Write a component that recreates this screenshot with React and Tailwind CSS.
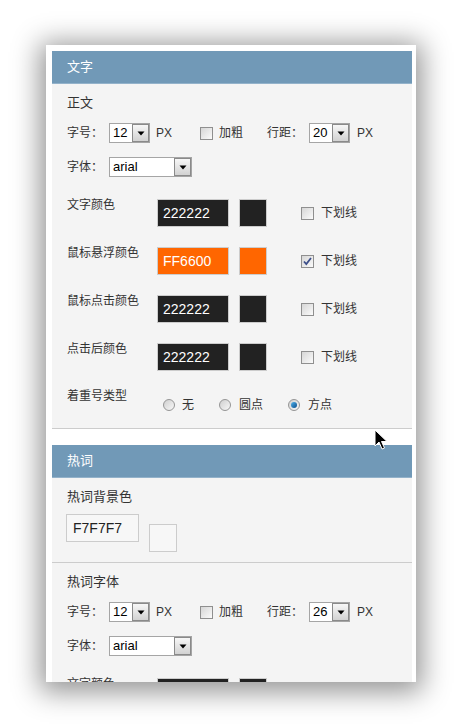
import React from 'react';

function Arrow() {
  return (
    <span className="flex h-[18px] w-[17px] items-center justify-center border border-[#8a8a8a] bg-gradient-to-b from-[#f7f7f7] to-[#d2d2d2]">
      <svg width="8" height="5" viewBox="0 0 8 5">
        <path d="M0.5 0.5h7L4 4.5z" fill="#000" />
      </svg>
    </span>
  );
}

function Select({ value, wide }) {
  return (
    <div className={`flex h-[20px] items-center border border-[#a5a5a5] bg-white ${wide ? 'w-[83px]' : 'w-[41px]'}`}>
      <span className="flex-1 pl-[3px] text-[13px] leading-[18px] text-black">{value}</span>
      <Arrow />
    </div>
  );
}

function Checkbox({ checked }) {
  return (
    <span className="flex h-[13px] w-[13px] shrink-0 items-center justify-center border border-[#8f8f8f] bg-gradient-to-br from-[#d6d6d6] to-[#fbfbfb]">
      {checked && (
        <svg width="9" height="9" viewBox="0 0 9 9">
          <path d="M1 4.5l2.3 2.6L8 1" fill="none" stroke="#3d4f8a" strokeWidth="1.8" />
        </svg>
      )}
    </span>
  );
}

function Radio({ checked }) {
  return (
    <span className="flex h-[12px] w-[12px] shrink-0 items-center justify-center rounded-full border border-[#959595] bg-gradient-to-br from-[#cfcfcf] to-[#f8f8f8]">
      {checked && <span className="h-[6px] w-[6px] rounded-full bg-gradient-to-br from-[#4fb2ec] to-[#0b4f8c]" />}
    </span>
  );
}

function FontRows({ title, line }) {
  return (
    <>
      <div className="text-[13px] leading-[18px]">{title}</div>
      <div className="mt-[11px] flex h-[20px] items-center text-[12px]">
        <span className="w-[42px]">字号：</span>
        <Select value="12" />
        <span className="ml-[6px]">PX</span>
        <span className="ml-[28px]"><Checkbox /></span>
        <span className="ml-[6px]">加粗</span>
        <span className="ml-[24px] w-[42px]">行距：</span>
        <Select value={line} />
        <span className="ml-[7px]">PX</span>
      </div>
      <div className="mt-[14px] flex h-[20px] items-center text-[12px]">
        <span className="w-[42px]">字体：</span>
        <Select value="arial" wide />
      </div>
    </>
  );
}

function ColorRow({ label, value, color, checked }) {
  return (
    <div className="flex h-[28px] items-start text-[12px]">
      <span className="w-[90px] leading-[12px]">{label}</span>
      <div
        className={`flex h-[28px] w-[72px] items-center border border-[#cccccc] pl-[5px] text-[14px] text-white ${color === 'orange' ? 'bg-[#ff6600]' : 'bg-[#222222]'}`}
      >
        {value}
      </div>
      <div className={`ml-[10px] h-[28px] w-[28px] border border-[#cccccc] ${color === 'orange' ? 'bg-[#ff6600]' : 'bg-[#222222]'}`} />
      <div className="ml-[34px] flex h-[28px] items-center">
        <Checkbox checked={checked} />
        <span className="ml-[7px]">下划线</span>
      </div>
    </div>
  );
}

function ColorRows() {
  return (
    <div className="mt-[22px] flex flex-col gap-[20px]">
      <ColorRow label="文字颜色" value="222222" />
      <ColorRow label="鼠标悬浮颜色" value="FF6600" color="orange" checked />
      <ColorRow label="鼠标点击颜色" value="222222" />
      <ColorRow label="点击后颜色" value="222222" />
    </div>
  );
}

function Header({ title }) {
  return (
    <div className="flex h-[33px] items-center border-b border-[#93b2ca] bg-[#7199b7] pl-[15px] text-[13px] text-white">
      {title}
    </div>
  );
}

export default function App() {
  return (
    <div className="relative h-[728px] w-[462px] overflow-hidden bg-white font-['Liberation_Sans','Noto_Sans_CJK_SC',sans-serif] text-[#333333]">
      <div className="ml-[46px] mt-[45px] h-[637px] w-[370px] overflow-hidden bg-white px-[6px] pt-[6px] shadow-[0_4px_26px_6px_rgba(0,0,0,0.42)]">
        <div className="w-[360px]">
          {/* 文字 */}
          <Header title="文字" />
          <div className="border-b border-[#cccccc] bg-[#f4f4f4] pb-[17px] pl-[15px] pt-[10px]">
            <FontRows title="正文" line="20" />
            <ColorRows />
            <div className="mt-[19px] flex items-start text-[12px]">
              <span className="w-[96px] leading-[12px]">着重号类型</span>
              <div className="mt-[9px] flex items-center gap-[25px]">
                <div className="flex items-center">
                  <Radio />
                  <span className="ml-[7px] leading-[12px]">无</span>
                </div>
                <div className="flex items-center">
                  <Radio />
                  <span className="ml-[8px] leading-[12px]">圆点</span>
                </div>
                <div className="flex items-center">
                  <Radio checked />
                  <span className="ml-[8px] leading-[12px]">方点</span>
                </div>
              </div>
            </div>
          </div>

          {/* 热词 */}
          <div className="mt-[16px]">
            <Header title="热词" />
            <div className="bg-[#f4f4f4]">
              <div className="border-b border-[#cccccc] pb-[10px] pl-[14px] pt-[10px]">
                <div className="pl-[1px] text-[13px] leading-[18px]">热词背景色</div>
                <div className="mt-[8px] flex items-start">
                  <div className="flex h-[28px] w-[73px] items-center border border-[#cccccc] bg-[#f7f7f7] pl-[6px] text-[14px] text-[#222222]">
                    F7F7F7
                  </div>
                  <div className="ml-[10px] mt-[10px] h-[28px] w-[28px] border border-[#cccccc] bg-[#f7f7f7]" />
                </div>
              </div>
              <div className="pb-[20px] pl-[15px] pt-[10px]">
                <FontRows title="热词字体" line="26" />
                <ColorRows />
              </div>
            </div>
          </div>
        </div>
      </div>

      {/* mouse pointer */}
      <svg className="absolute left-[374px] top-[429px]" width="14" height="22" viewBox="0 0 14 22">
        <path d="M1 1v16l4-4 3 7 2.5-1-3-6.5H13z" fill="#000" stroke="#fff" strokeWidth="1" strokeLinejoin="round" />
      </svg>
    </div>
  );
}
